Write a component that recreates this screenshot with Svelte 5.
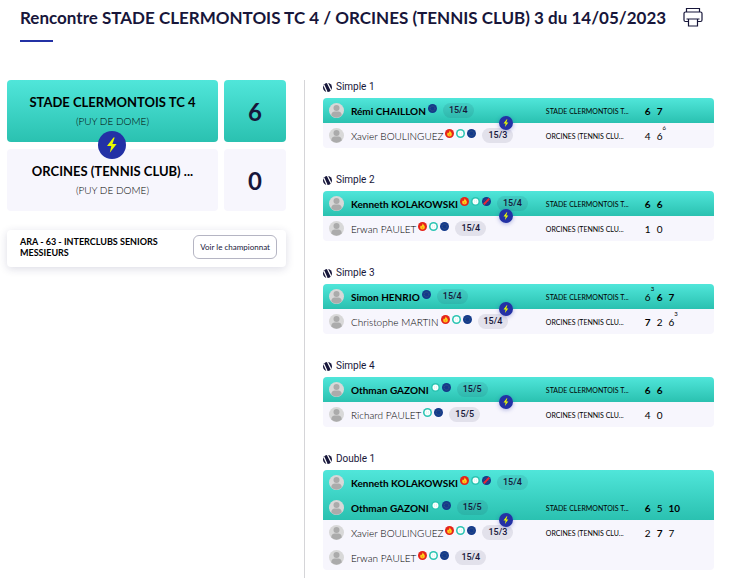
<script>
  const KENNETH = { name: 'Kenneth KOLAKOWSKI', badges: ['flame', 'ball', 'struck'], rank: '15/4' };
  const OTHMAN = { name: 'Othman GAZONI', badges: ['ball', 'ring'], rank: '15/5' };
  const XAVIER = { name: 'Xavier BOULINGUEZ', badges: ['flame', 'ball', 'ring'], rank: '15/3' };
  const ERWAN = { name: 'Erwan PAULET', badges: ['flame', 'ball', 'ring'], rank: '15/4' };

  const matches = [
    {
      title: 'Simple 1',
      home: [{ name: 'Rémi CHAILLON', badges: ['ring'], rank: '15/4' }],
      away: [XAVIER],
      homeSets: [{ games: 6, won: true }, { games: 7, won: true }],
      awaySets: [{ games: 4 }, { games: 6, tie: 6 }],
    },
    {
      title: 'Simple 2',
      home: [KENNETH],
      away: [ERWAN],
      homeSets: [{ games: 6, won: true }, { games: 6, won: true }],
      awaySets: [{ games: 1 }, { games: 0 }],
    },
    {
      title: 'Simple 3',
      home: [{ name: 'Simon HENRIO', badges: ['ring'], rank: '15/4' }],
      away: [{ name: 'Christophe MARTIN', badges: ['flame', 'ball', 'ring'], rank: '15/4' }],
      homeSets: [{ games: 6, tie: 3 }, { games: 6, won: true }, { games: 7, won: true }],
      awaySets: [{ games: 7, won: true }, { games: 2 }, { games: 6, tie: 3 }],
    },
    {
      title: 'Simple 4',
      home: [OTHMAN],
      away: [{ name: 'Richard PAULET', badges: ['ball', 'ring'], rank: '15/5' }],
      homeSets: [{ games: 6, won: true }, { games: 6, won: true }],
      awaySets: [{ games: 4 }, { games: 0 }],
    },
    {
      title: 'Double 1',
      home: [KENNETH, OTHMAN],
      away: [XAVIER, ERWAN],
      homeSets: [{ games: 6, won: true }, { games: 5 }, { games: 10, won: true }],
      awaySets: [{ games: 2 }, { games: 7, won: true }, { games: 7 }],
    },
  ];
</script>

{#snippet bolt()}
  <svg viewBox="0 0 28 28" aria-hidden="true">
    <circle cx="14" cy="14" r="14" fill="#2331a5" />
    <path d="M15.5 6.5 9 15h4.3l-1.5 6.8L18.6 13h-4.2l2.3-6.5z" fill="#e9fb00" />
  </svg>
{/snippet}

{#snippet badge(kind)}
  <svg class="badge" viewBox="0 0 20 20" aria-hidden="true">
    {#if kind === 'flame'}
      <circle cx="10" cy="10" r="10" fill="#e5231b" />
      <path d="M10.5 3c.5 3 4.8 4.5 4.8 8.5a5.3 5.3 0 0 1-10.6 0c0-1.8 1-2.8 1.700-3.700l1 1.400c1.500-1.300 2.800-3.500 3.100-6.200z" fill="#ffd21c" />
      <path d="M10 10c1 1 2 2 2 3.200a2 2 0 0 1-4 0c0-1.200 1-2.200 2-3.200z" fill="#fb9a16" />
    {:else if kind === 'ball'}
      <circle cx="10" cy="10" r="10" fill="#2cc5b3" />
      <circle cx="10" cy="10" r="6.500" fill="#fff" />
      <path d="M6 6c3 1 3 6 0 8M14 6c-3 1-3 6 0 8" fill="none" stroke="#b8eee5" />
    {:else}
      <circle cx="10" cy="10" r="10" fill="#12398b" />
      <circle cx="10" cy="10" r="5.500" fill="none" stroke="#566a78" stroke-width="1.500" stroke-dasharray="2 1.500" />
      {#if kind === 'struck'}
        <path d="M4 16.500 16 3.500" stroke="#ef2632" stroke-width="4.500" />
      {/if}
    {/if}
  </svg>
{/snippet}

{#snippet side(players, club, sets, infoRow, home)}
  <div class="side" class:home>
    {#each players as player, i}
      <div class="row">
        <div class="player">
          <svg class="avatar" viewBox="0 0 30 30" aria-hidden="true">
            <circle cx="15" cy="15" r="15" fill="#d8d8d8" />
            <circle cx="15" cy="10" r="6" fill="#ababab" />
            <path d="M4.500 25c0-5 3-8 7-8h7c4 0 7 3 7 8a15 15 0 0 1-21 0z" fill="#ababab" />
          </svg>
          <span class="name">{player.name}</span>
          <span class="badges">
            {#each player.badges as kind}
              {@render badge(kind)}
            {/each}
          </span>
          <span class="rank">{player.rank}</span>
        </div>
        {#if i === infoRow}
          <span class="club">{club}</span>
          <div class="sets">
            {#each sets as set}
              <span class="set" class:won={set.won}>
                {set.games}{#if set.tie}<sup>{set.tie}</sup>{/if}
              </span>
            {/each}
          </div>
        {/if}
      </div>
    {/each}
  </div>
{/snippet}

<header>
  <h1>Rencontre STADE CLERMONTOIS TC 4 / ORCINES (TENNIS CLUB) 3 du 14/05/2023</h1>
  <button class="print" aria-label="Imprimer">
    <svg viewBox="0 0 20 20" fill="none" stroke="#17163a" stroke-width="1.200" aria-hidden="true">
      <path d="M3.500 5V1.500h13V5M5.500 14.500h-3a1.500 1.500 0 0 1-1.500-1.500V6.500A1.500 1.500 0 0 1 2.500 5h15A1.500 1.500 0 0 1 19 6.500V13a1.500 1.500 0 0 1-1.500 1.500h-3M3.500 12h13M5.500 12v7h9v-7" />
    </svg>
  </button>
</header>

<main>
  <aside>
    <div class="board">
      <div class="team home">
        <strong>STADE CLERMONTOIS TC 4</strong>
        <span>(PUY DE DOME)</span>
        <div class="versus">{@render bolt()}</div>
      </div>
      <div class="score home">6</div>
      <div class="team">
        <strong>ORCINES (TENNIS CLUB) ...</strong>
        <span>(PUY DE DOME)</span>
      </div>
      <div class="score">0</div>
    </div>

    <div class="championship">
      <p>ARA - 63 - INTERCLUBS SENIORS MESSIEURS</p>
      <button>Voir le championnat</button>
    </div>
  </aside>

  <section>
    {#each matches as match}
      <article>
        <h2>
          <svg viewBox="0 0 18 18" aria-hidden="true">
            <circle cx="9" cy="9" r="9" fill="#17163a" />
            <path d="M1.500 3.500 8 18M9 0l7.500 15" stroke="#fff" stroke-width="2.500" />
          </svg>
          {match.title}
        </h2>
        <div class="card">
          {@render side(match.home, 'STADE CLERMONTOIS T...', match.homeSets, match.home.length - 1, true)}
          {@render side(match.away, 'ORCINES (TENNIS CLU...', match.awaySets, 0, false)}
          <div class="duel">{@render bolt()}</div>
        </div>
      </article>
    {/each}
  </section>
</main>

<style>
  :global(body) {
    margin: 0;
    background: #fff;
    color: #17163a;
    font-family: Lato, 'Liberation Sans', sans-serif;
  }
  svg {
    display: block;
    width: 100%;
    height: 100%;
  }
  button {
    font-family: inherit;
    cursor: pointer;
  }
  header {
    display: flex;
    align-items: flex-start;
    gap: 17px;
    padding: 7px 20px 0;
  }
  h1 {
    margin: 0;
    font-size: 17px;
    line-height: 22px;
    font-weight: 700;
  }
  h1::after {
    content: '';
    display: block;
    width: 33px;
    height: 2px;
    margin-top: 11px;
    background: #2331a5;
  }
  .print {
    flex: none;
    width: 20px;
    height: 20px;
    padding: 0;
    border: 0;
    background: none;
  }
  main {
    display: grid;
    grid-template-columns: 42fr 58fr;
    margin-top: 38px;
    padding: 0 21px 0 7px;
  }
  aside {
    padding-right: 18px;
  }
  .board {
    display: grid;
    grid-template-columns: 1fr 62px;
    gap: 7px 6px;
  }
  .team,
  .score {
    display: flex;
    align-items: center;
    justify-content: center;
    height: 62px;
    border-radius: 4px;
    background: #f7f6fd;
  }
  .team {
    position: relative;
    flex-direction: column;
    gap: 4px;
    color: #000;
  }
  .team strong {
    font-size: 13px;
    line-height: 16px;
  }
  .team span {
    font-size: 10px;
    line-height: 14px;
    font-weight: 300;
  }
  .score {
    font-size: 24px;
    font-weight: 700;
  }
  .team.home,
  .score.home,
  .side.home {
    background: linear-gradient(#50e6da, #2ac1b0);
  }
  .versus {
    position: absolute;
    z-index: 1;
    bottom: -17px;
    left: 50%;
    width: 28px;
    height: 28px;
    margin-left: -14px;
  }
  .championship {
    display: flex;
    align-items: center;
    justify-content: space-between;
    gap: 8px;
    margin-top: 19px;
    padding: 5px 9px 8px 13px;
    border-radius: 4px;
    box-shadow: 0 2px 8px rgba(35, 35, 95, 0.16);
  }
  .championship p {
    margin: 0;
    color: #000;
    font-size: 9px;
    line-height: 11px;
    font-weight: 700;
  }
  .championship button {
    flex: none;
    height: 24px;
    padding: 0 6px;
    border: 1px solid #b5b5c3;
    border-radius: 6px;
    background: #fff;
    color: #17163a;
    font-size: 8px;
  }
  section {
    padding-left: 18px;
    border-left: 1px solid #d5d5d8;
  }
  article {
    margin-bottom: 25px;
  }
  article:last-child {
    margin-bottom: 8px;
  }
  h2 {
    display: flex;
    align-items: center;
    gap: 4px;
    margin: 0 0 4px;
    font-family: Roboto, sans-serif;
    font-size: 10px;
    line-height: 14px;
    font-weight: 400;
  }
  h2 svg {
    width: 9px;
    height: 9px;
  }
  .card {
    position: relative;
    display: grid;
    grid-template-rows: 1fr 1fr;
    border-radius: 4px;
    background: #f7f6fd;
  }
  .side.home {
    border-radius: 4px 4px 0 0;
  }
  .row {
    display: flex;
    align-items: center;
    height: 25px;
    color: #000;
  }
  .player {
    display: flex;
    align-items: center;
    box-sizing: border-box;
    width: 57%;
    padding-left: 6px;
    white-space: nowrap;
  }
  .avatar {
    width: 15px;
    height: 15px;
    margin-right: 7px;
  }
  .name {
    font-size: 10px;
    font-weight: 300;
  }
  .home .name {
    font-weight: 700;
  }
  .badges {
    display: flex;
    gap: 2px;
    margin: 0 6px 4px 2px;
  }
  .badge {
    width: 9px;
    height: 9px;
  }
  .rank {
    padding: 0 6px;
    border-radius: 8px;
    background: rgba(23, 22, 58, 0.09);
    color: #17163a;
    font-family: Roboto, sans-serif;
    font-size: 9px;
    line-height: 15px;
    font-weight: 500;
  }
  .club {
    width: 22%;
    font-size: 7px;
    white-space: nowrap;
  }
  .sets {
    display: flex;
    gap: 6px;
    margin-left: 13px;
    font-size: 10px;
  }
  .set {
    position: relative;
  }
  .won {
    font-weight: 700;
  }
  sup {
    position: absolute;
    top: -5px;
    left: 100%;
    font-size: 6px;
    line-height: 6px;
  }
  .duel {
    position: absolute;
    top: 50%;
    left: 45%;
    width: 14px;
    height: 14px;
    margin-top: -7px;
    border-radius: 50%;
    box-shadow: 0 1px 4px rgba(35, 49, 165, 0.35);
  }
</style>
